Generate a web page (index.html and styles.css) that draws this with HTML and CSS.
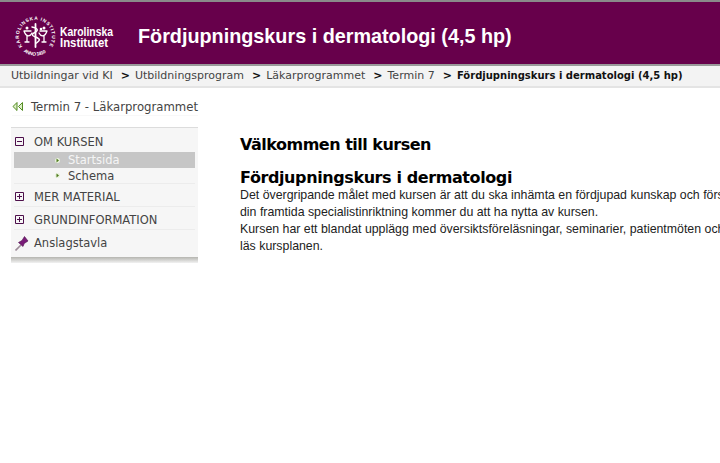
FILE: index.html
```html
<!DOCTYPE html>
<html lang="sv">
<head>
<meta charset="utf-8">
<title>Fördjupningskurs i dermatologi (4,5 hp)</title>
<link rel="stylesheet" href="styles.css">
</head>
<body>
<header class="banner">
  <svg class="logo" width="102" height="44" viewBox="0 0 102 44">
    <defs>
      <path id="ring-top" d="M8.500 32.500A16.500 16.500 0 1 1 34.500 32.500"/>
      <path id="ring-bottom" d="M9.500 37.500A19.500 19.500 0 0 0 33.500 37.500"/>
    </defs>
    <text class="ring-text"><textPath href="#ring-top" textLength="76">KAROLINSKA INSTITUTET</textPath></text>
    <text class="ring-text"><textPath href="#ring-bottom" textLength="24">ANNO 1810</textPath></text>
    <g fill="none" stroke="#fff" stroke-linecap="round">
      <path d="M21.500 10V33" stroke-width="1.800"/>
      <path d="M18 13c5 1 7 3 3.500 5s-5 3 0 5 5 3 1 6" stroke-width="1.500"/>
      <path d="M10 17c2 6 6 6 8 2M10 17h7M13 22v6M11 28h4" stroke-width="1.300"/>
      <path d="M33 17c-2 6-6 6-8 2M33 17h-7M30 22v6M28 28h4" stroke-width="1.300"/>
    </g>
    <g fill="#fff"><circle cx="13" cy="14" r="1.500"/><circle cx="30" cy="14" r="1.500"/><circle cx="27" cy="15" r="1.300"/></g>
    <text class="logo-name" x="46" y="22" textLength="53" lengthAdjust="spacingAndGlyphs">Karolinska</text>
    <text class="logo-name" x="46" y="33" textLength="48" lengthAdjust="spacingAndGlyphs">Institutet</text>
  </svg>
  <h1 class="banner-title">Fördjupningskurs i dermatologi (4,5 hp)</h1>
</header>
<nav class="crumbs">
  <a>Utbildningar vid KI</a><b class="sep">&gt;</b>
  <a>Utbildningsprogram</a><b class="sep">&gt;</b>
  <a>Läkarprogrammet</a><b class="sep">&gt;</b>
  <a>Termin 7</a><b class="sep">&gt;</b>
  <strong>Fördjupningskurs i dermatologi (4,5 hp)</strong>
</nav>
<div class="back">
  <svg width="12" height="9" viewBox="0 0 12 9"><path d="M5 .5 1 4.500l4 4zM10.500.5l-4 4 4 4z" fill="#dff0c8" stroke="#4f8a1e"/></svg>
  <span>Termin 7 - Läkarprogrammet</span>
</div>
<div class="main">
  <aside class="side">
    <div class="side-body">
      <div class="sec">
        <div class="row row-open">
          <svg class="tog" width="9" height="9" viewBox="0 0 9 9"><path d="M.5.500h8v8h-8zM2 4.500h5" fill="none" stroke="#4d0f4b"/></svg>
          <span>OM KURSEN</span>
        </div>
        <div class="sub sub-on"><svg class="dot" width="5" height="7" viewBox="0 0 5 7"><circle cx="2.500" cy="3.500" r="2.500" fill="#e8f2dc"/><path d="M1.500 1.500 4 3.500l-2.500 2z" fill="#4f7a1e"/></svg><span>Startsida</span></div>
        <div class="sub"><svg class="dot" width="5" height="7" viewBox="0 0 5 7"><circle cx="2.500" cy="3.500" r="2.500" fill="#e8f2dc"/><path d="M1.500 1.500 4 3.500l-2.500 2z" fill="#4f7a1e"/></svg><span>Schema</span></div>
      </div>
      <div class="row sec">
        <svg class="tog" width="9" height="9" viewBox="0 0 9 9"><path d="M.5.500h8v8h-8zM2 4.500h5M4.500 2v5" fill="none" stroke="#4d0f4b"/></svg>
        <span>MER MATERIAL</span>
      </div>
      <div class="row sec">
        <svg class="tog" width="9" height="9" viewBox="0 0 9 9"><path d="M.5.500h8v8h-8zM2 4.500h5M4.500 2v5" fill="none" stroke="#4d0f4b"/></svg>
        <span>GRUNDINFORMATION</span>
      </div>
      <div class="row sec">
        <svg class="pin" width="14" height="15" viewBox="0 0 14 15"><path d="M.5 14.500 6 9" stroke="#9c8a98" stroke-width="1.600"/><path d="M3.500 6.500l4.500 4 1.200-3 3.800-2.500-3.500-4.500L7 4.500z" fill="#7a1c78" stroke="#4d0f4b" stroke-width=".6"/></svg>
        <span>Anslagstavla</span>
      </div>
    </div>
    <div class="side-foot"></div>
  </aside>
  <main class="content">
    <h2 class="welcome">Välkommen till kursen</h2>
    <h3 class="course">Fördjupningskurs i dermatologi</h3>
    <p class="lead">Det övergripande målet med kursen är att du ska inhämta en fördjupad kunskap och förståelse för dermatologi<br>din framtida specialistinriktning kommer du att ha nytta av kursen.<br>Kursen har ett blandat upplägg med översiktsföreläsningar, seminarier, patientmöten och självstudier<br>läs kursplanen.</p>
  </main>
</div>
</body>
</html>
```
FILE: styles.css
```css
html, body { margin: 0; padding: 0; background: #fff; }
body { width: 720px; height: 463px; overflow: hidden; font-family: "DejaVu Sans", Verdana, sans-serif; color: #333; }
.banner { height: 56px; padding-top: 6px; display: flex; align-items: center; background: #67004b; border-top: 2px solid #8a8a8a; border-bottom: 2px solid #9a9a9a; }
.logo { flex: none; margin-left: 14px; }
.ring-text { font: bold 4.800px "Liberation Sans", sans-serif; fill: #fff; }
.logo-name { font: bold 13px "Liberation Sans", sans-serif; fill: #fff; }
.banner-title { margin: 0 0 0 22px; font: bold 19.800px "Liberation Sans", Arial, sans-serif; color: #fff; white-space: nowrap; }
.crumbs { height: 19px; padding: 0 0 1px 11px; display: flex; align-items: center; background: #f3f3f3; border-bottom: 2px solid #e4e4e4; font-size: 11px; white-space: nowrap; color: #444; }
.crumbs strong { color: #111; font-size: 10px; }
.sep { margin: 0 5px 0 8px; color: #111; font: bold 11px "DejaVu Sans", sans-serif; }
.back { display: flex; align-items: center; gap: 7px; width: 186px; height: 17px; margin: 10px 0 0 12px; border-bottom: 1px solid #f8f8f8; font-size: 11.700px; color: #444; white-space: nowrap; }
.main { display: flex; margin-top: 11px; }
.side { flex: none; width: 187px; height: 136px; margin-left: 11px; box-sizing: border-box; display: flex; flex-direction: column; background: #f6f6f6; border-top: 1px solid #dcdcdc; font-size: 11.500px; color: #444; }
.side-body { flex: 1; padding: 3px 3px 4px; }
.side-foot { height: 6px; background: linear-gradient(#b5b5b0, #f2f2f2); }
.sec { border-bottom: 1px solid #ececec; }
.sec:last-child { border-bottom: 0; height: 23px; }
.row { display: flex; align-items: center; box-sizing: border-box; height: 23px; padding: 3px 0 0 1px; }
.row-open { height: 21px; padding-top: 0; }
.tog { flex: none; margin-right: 10px; }
.pin { flex: none; margin-right: 5px; }
.sub { display: flex; align-items: center; height: 15px; padding-left: 41px; }
.sub-on { height: 16px; background: #c6c6c6; color: #f5f5f5; }
.dot { flex: none; margin-right: 8px; }
.content { margin-left: 42px; padding-top: 8px; white-space: nowrap; color: #111; font-family: "Liberation Sans", Arial, sans-serif; }
.welcome { margin: 0; font: bold 16px/20px "DejaVu Sans", sans-serif; letter-spacing: -.5px; color: #000; }
.course { margin: 15px 0 1px; font: bold 16px/16px "DejaVu Sans", sans-serif; letter-spacing: -.4px; color: #000; }
.lead { margin: 0; font-size: 12.350px; line-height: 17px; color: #222; }
```
